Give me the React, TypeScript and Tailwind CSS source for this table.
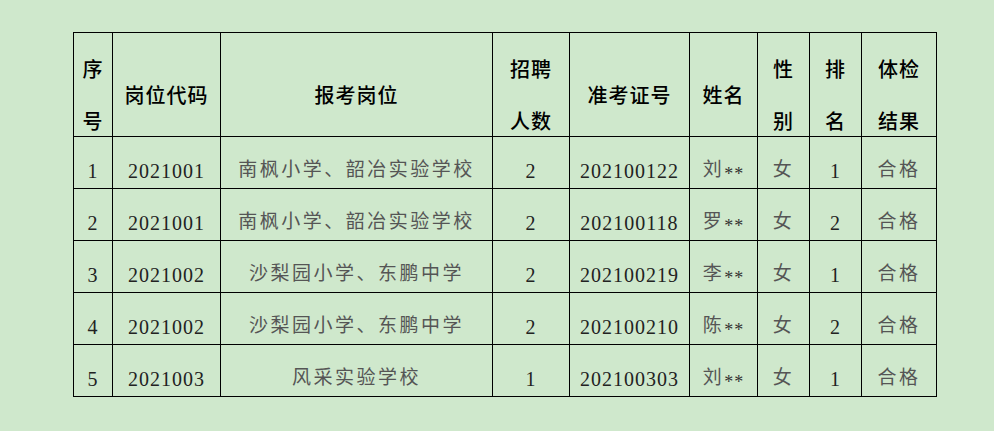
const rows = [
  { no: "1", code: "2021001", post: "南枫小学、韶冶实验学校", num: "2", ticket: "202100122", name: "刘", sex: "女", rank: "1", result: "合格" },
  { no: "2", code: "2021001", post: "南枫小学、韶冶实验学校", num: "2", ticket: "202100118", name: "罗", sex: "女", rank: "2", result: "合格" },
  { no: "3", code: "2021002", post: "沙梨园小学、东鹏中学", num: "2", ticket: "202100219", name: "李", sex: "女", rank: "1", result: "合格" },
  { no: "4", code: "2021002", post: "沙梨园小学、东鹏中学", num: "2", ticket: "202100210", name: "陈", sex: "女", rank: "2", result: "合格" },
  { no: "5", code: "2021003", post: "风采实验学校", num: "1", ticket: "202100303", name: "刘", sex: "女", rank: "1", result: "合格" },
];

const widths = [39, 108, 272, 77, 120, 68, 52, 52, 75];

const headers: string[][] = [
  ["序", "号"],
  ["岗位代码"],
  ["报考岗位"],
  ["招聘", "人数"],
  ["准考证号"],
  ["姓名"],
  ["性", "别"],
  ["排", "名"],
  ["体检", "结果"],
];

const serif = "font-['Liberation_Serif','Noto_Sans_CJK_SC',serif]";

function Head({ lines }: { lines: string[] }) {
  return (
    <th className="border border-black p-0 align-top font-normal">
      <div className="h-[103px] pt-[20px] flex flex-col items-center justify-center">
        {lines.map((l) => (
          <div
            key={l}
            className="leading-[52px] text-[20px] tracking-[1px] text-black font-medium font-['Noto_Sans_CJK_SC',sans-serif]"
          >
            {l}
          </div>
        ))}
      </div>
    </th>
  );
}

function Cell({ children, cjk }: { children: React.ReactNode; cjk?: boolean }) {
  return (
    <td className="border border-black p-0 align-top">
      <div
        className={
          cjk
            ? `h-[51px] pt-[16px] flex items-center justify-center whitespace-nowrap text-[19px] tracking-[2.5px] text-[#555] ${serif}`
            : `h-[51px] pt-[16px] flex items-center justify-center whitespace-nowrap text-[20px] tracking-[1px] text-[#222] ${serif}`
        }
      >
        {children}
      </div>
    </td>
  );
}

export default function App() {
  return (
    <div className="w-[994px] h-[431px] bg-[#cfe8cc] pt-[32px] pl-[73px]">
      <table className="border-collapse table-fixed w-[864px]">
        <colgroup>
          {widths.map((w, i) => (
            <col key={i} style={{ width: w }} />
          ))}
        </colgroup>
        <thead>
          <tr>
            {headers.map((h, i) => (
              <Head key={i} lines={h} />
            ))}
          </tr>
        </thead>
        <tbody>
          {rows.map((r) => (
            <tr key={r.no}>
              <Cell>{r.no}</Cell>
              <Cell>{r.code}</Cell>
              <Cell cjk>{r.post}</Cell>
              <Cell>{r.num}</Cell>
              <Cell>{r.ticket}</Cell>
              <Cell cjk>
                {r.name}
                <span className="inline-block translate-y-[4px] text-[18px] tracking-[1px] text-[#333]">**</span>
              </Cell>
              <Cell cjk>{r.sex}</Cell>
              <Cell>{r.rank}</Cell>
              <Cell cjk>{r.result}</Cell>
            </tr>
          ))}
        </tbody>
      </table>
    </div>
  );
}
